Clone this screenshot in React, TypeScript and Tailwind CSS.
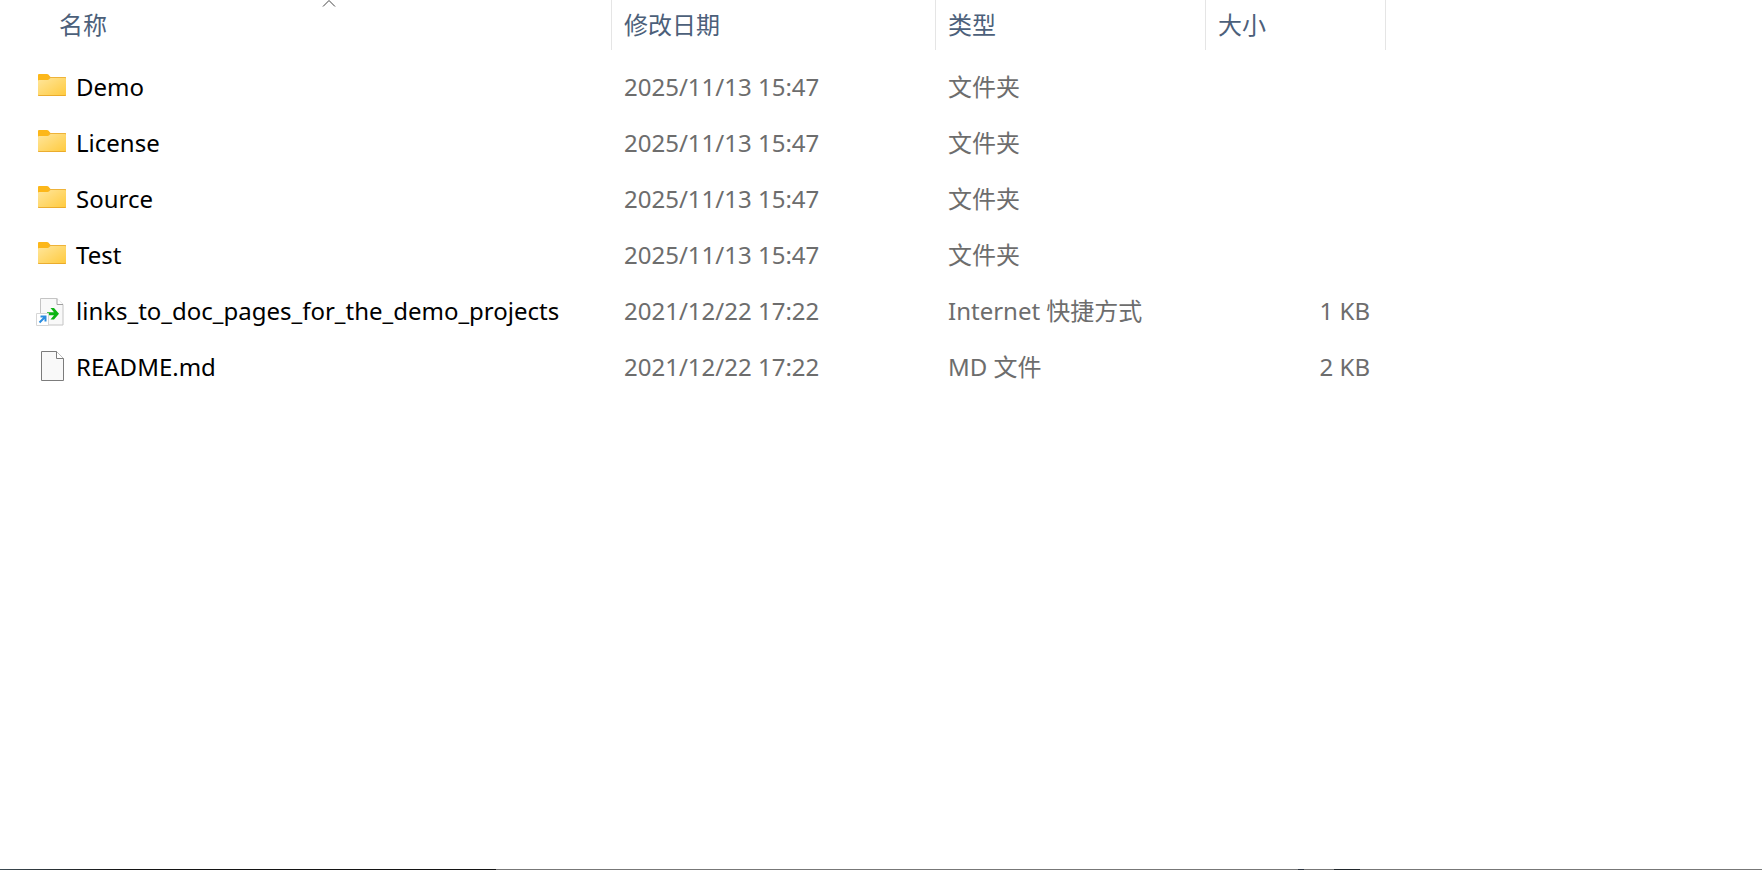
import React from "react";

type Kind = "folder" | "shortcut" | "file";

interface Entry {
  name: string;
  date: string;
  type: string;
  size: string;
  kind: Kind;
}

const entries: Entry[] = [
  { name: "Demo", date: "2025/11/13 15:47", type: "文件夹", size: "", kind: "folder" },
  { name: "License", date: "2025/11/13 15:47", type: "文件夹", size: "", kind: "folder" },
  { name: "Source", date: "2025/11/13 15:47", type: "文件夹", size: "", kind: "folder" },
  { name: "Test", date: "2025/11/13 15:47", type: "文件夹", size: "", kind: "folder" },
  {
    name: "links_to_doc_pages_for_the_demo_projects",
    date: "2021/12/22 17:22",
    type: "Internet 快捷方式",
    size: "1 KB",
    kind: "shortcut",
  },
  { name: "README.md", date: "2021/12/22 17:22", type: "MD 文件", size: "2 KB", kind: "file" },
];

function FolderIcon() {
  return (
    <svg className="size-8 shrink-0" viewBox="0 0 32 32" aria-hidden="true">
      <defs>
        <linearGradient id="folder-front" x1="0" y1="0" x2="1" y2="1">
          <stop offset="0" stopColor="#ffe69c" />
          <stop offset="1" stopColor="#ffca3d" />
        </linearGradient>
      </defs>
      <path d="M2 4a1 1 0 0 1 1-1h8a2 2 0 0 1 1.400.600L14.500 6H29a1 1 0 0 1 1 1v5H2z" fill="#fcb71a" />
      <path d="M13 6h16a1 1 0 0 1 1 1v3H13z" fill="#eeb33a" />
      <path d="M2 10a1 1 0 0 1 1-1h8.500a3 3 0 0 0 1.700-.700L14.500 7H29a1 1 0 0 1 1 1v16a1 1 0 0 1-1 1H3a1 1 0 0 1-1-1z" fill="url(#folder-front)" />
      <path d="M2 23.500v.500a1 1 0 0 0 1 1h26a1 1 0 0 0 1-1v-.500a1 1 0 0 1-1 .700H3a1 1 0 0 1-1-.700z" fill="#e5a020" />
    </svg>
  );
}

function FileIcon() {
  return (
    <svg className="size-8 shrink-0" viewBox="0 0 32 32" aria-hidden="true">
      <path d="M5.500.500h15l7 7v22h-22z" fill="#f9f9f9" stroke="#7c7c7c" />
      <path d="M20.500.500v7h7" fill="#fff" stroke="#7c7c7c" />
    </svg>
  );
}

function ShortcutIcon() {
  return (
    <svg className="size-8 shrink-0" viewBox="0 0 32 32" aria-hidden="true">
      <path d="M4.500 3.500h16l6.500 6v20.500h-22.500z" fill="#f9f9f9" stroke="#c4c4c4" />
      <path d="M21 3.500v6h6" fill="#fff" stroke="#a0a0a0" />
      <path d="M11 17.200h7l-3.500-4.200h3.500l5 5.700-5 5.800h-3.500l3.500-4.300h-7z" fill="#0cb414" />
      <path d="M.500 18.500h12v12H.500z" fill="#fff" stroke="#d6d6d6" />
      <path d="M3.500 27.500l6-6M4.500 21.500h5v5" fill="none" stroke="#2b8de0" strokeWidth="2" />
    </svg>
  );
}

const icons: Record<Kind, () => React.JSX.Element> = {
  folder: FolderIcon,
  file: FileIcon,
  shortcut: ShortcutIcon,
};

const columns = ["修改日期", "类型", "大小"];

export default function App() {
  return (
    <div className="flex min-h-screen flex-col bg-white font-['Noto_Sans','Noto_Sans_CJK_SC',sans-serif] text-2xl text-[#6d6d6d]">
      <main className="grow">
        <table className="w-full table-fixed border-collapse text-left">
          <colgroup>
            <col className="w-[612px]" />
            <col className="w-[324px]" />
            <col className="w-[270px]" />
            <col className="w-[180px]" />
            <col />
          </colgroup>
          <thead className="text-[#4c607a]">
            <tr>
              <th className="p-0 pb-[9px] font-normal" aria-sort="ascending">
                <div className="h-[50px] border-r border-[#e5e5e5] pl-[46px]">
                  <button type="button" className="relative flex h-full w-full items-center pl-[13px]">
                    <svg
                      className="absolute top-0 left-1/2 h-2 w-4 -translate-x-1/2"
                      viewBox="0 0 16 8"
                      fill="none"
                      stroke="#444"
                      aria-hidden="true"
                    >
                      <path d="M2 6.500L8 .500l6 6" />
                    </svg>
                    名称
                  </button>
                </div>
              </th>
              {columns.map((column) => (
                <th key={column} className="p-0 pb-[9px] font-normal">
                  <div className="h-[50px] border-r border-[#e5e5e5]">
                    <button type="button" className="flex h-full w-full items-center pl-3">
                      {column}
                    </button>
                  </div>
                </th>
              ))}
              <td />
            </tr>
          </thead>
          <tbody>
            {entries.map((entry) => {
              const Icon = icons[entry.kind];
              return (
                <tr key={entry.name} className="h-14">
                  <td className="p-0 pl-9 text-black">
                    <div className="flex items-center gap-2">
                      <Icon />
                      <span className="whitespace-nowrap">{entry.name}</span>
                    </div>
                  </td>
                  <td className="p-0 pl-3 whitespace-nowrap">{entry.date}</td>
                  <td className="p-0 pl-3 whitespace-nowrap">{entry.type}</td>
                  <td className="p-0 pr-4 text-right whitespace-nowrap">{entry.size}</td>
                  <td />
                </tr>
              );
            })}
          </tbody>
        </table>
      </main>
      <div className="flex h-px bg-[#777]">
        <div className="w-[124px] bg-linear-to-r from-[#3c4a52] to-[#141414]" />
        <div className="w-[372px] bg-[#141414]" />
        <div className="ml-[802px] w-1.5 bg-[#2c3440]" />
        <div className="ml-[30px] w-[26px] bg-[#20262b]" />
      </div>
    </div>
  );
}
